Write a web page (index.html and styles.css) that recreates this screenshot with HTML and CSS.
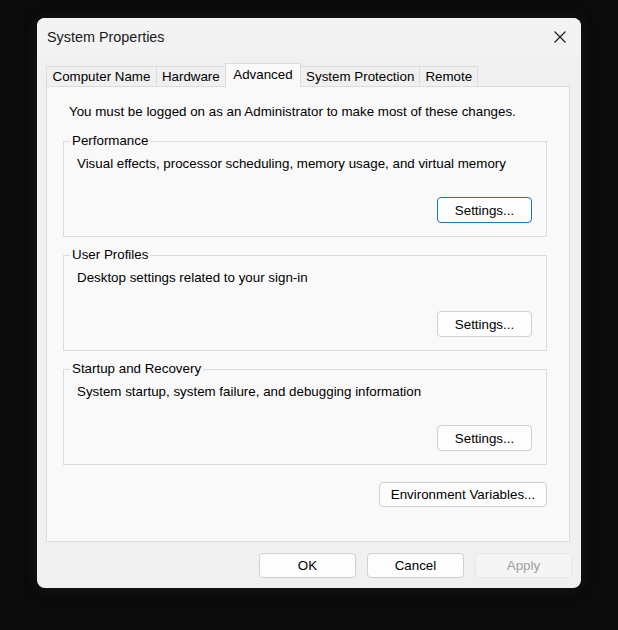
FILE: index.html
```html
<!DOCTYPE html>
<html>
<head>
  <meta charset="utf-8">
  <title>System Properties</title>
  <link rel="stylesheet" href="styles.css">
</head>
<body>
  <div class="dialog">
    <div class="titlebar">
      <span class="title">System Properties</span>
      <button class="close" title="Close">
        <svg width="12" height="12" viewBox="0 0 12 12">
          <path d="M0.5 0.5 L11.5 11.5 M11.5 0.5 L0.5 11.5" stroke="#1a1a1a" stroke-width="1.1" fill="none"/>
        </svg>
      </button>
    </div>
    <div class="main">
      <div class="tabs">
        <div class="tab">Computer Name</div>
        <div class="tab">Hardware</div>
        <div class="tab active">Advanced</div>
        <div class="tab">System Protection</div>
        <div class="tab">Remote</div>
      </div>
      <div class="panel">
        <p class="note">You must be logged on as an Administrator to make most of these changes.</p>

        <fieldset class="group">
          <legend>Performance</legend>
          <p class="desc">Visual effects, processor scheduling, memory usage, and virtual memory</p>
          <div class="row">
            <button class="btn focus">Settings...</button>
          </div>
        </fieldset>

        <fieldset class="group">
          <legend>User Profiles</legend>
          <p class="desc">Desktop settings related to your sign-in</p>
          <div class="row">
            <button class="btn">Settings...</button>
          </div>
        </fieldset>

        <fieldset class="group">
          <legend>Startup and Recovery</legend>
          <p class="desc">System startup, system failure, and debugging information</p>
          <div class="row">
            <button class="btn">Settings...</button>
          </div>
        </fieldset>

        <div class="row env">
          <button class="btn env-btn">Environment Variables...</button>
        </div>
      </div>
      <div class="footer">
        <button class="btn wide">OK</button>
        <button class="btn wide">Cancel</button>
        <button class="btn wide disabled">Apply</button>
      </div>
    </div>
  </div>
</body>
</html>
```

FILE: styles.css
```css
* {
  box-sizing: border-box;
}

html, body {
  margin: 0;
  height: 100%;
}

body {
  background: #0b0b0b;
  font-family: "Liberation Sans", Arial, sans-serif;
  font-size: 13.35px;
  color: #000;
}

.dialog {
  width: 544px;
  height: 570px;
  margin: 18px auto 0;
  background: #f0f0f0;
  border-radius: 8px;
  overflow: hidden;
  display: flex;
  flex-direction: column;
  box-shadow: 0 0 14px rgba(60, 60, 60, 0.25);
}

.titlebar {
  height: 37px;
  background: #f3f3f3;
  display: flex;
  align-items: center;
  padding-left: 10px;
}

.title {
  flex: 1;
  font-size: 14.4px;
  color: #1a1a1a;
}

.close {
  width: 42px;
  height: 37px;
  border: 0;
  padding: 0;
  background: none;
  display: flex;
  align-items: center;
  justify-content: center;
}

.main {
  padding: 8px 11px 0 9px;
}

/* tab strip */
.tabs {
  display: flex;
  align-items: flex-end;
  height: 23px;
}

.tab {
  height: 20px;
  padding: 0 5px;
  margin-left: -1px;
  border: 1px solid #dcdcdc;
  border-bottom: 0;
  background: #f0f0f0;
  display: flex;
  align-items: center;
  white-space: nowrap;
}

.tab:first-child {
  margin-left: 0;
  padding: 0 5.5px;
}

.tab.active {
  height: 24px;
  margin-bottom: -1px;
  padding: 0 7.5px 3px;
  background: #f9f9f9;
  position: relative;
  z-index: 1;
}

.panel {
  height: 456px;
  background: #f9f9f9;
  border: 1px solid #dcdcdc;
  padding: 17px 22px 0 16px;
}

.note {
  margin: 0 0 13px 6px;
  line-height: 16px;
}

/* group boxes */
.group {
  margin: 0 0 10px;
  padding: 7px 14px 13px 13px;
  border: 1px solid #dcdcdc;
  min-width: 0;
}

.group legend {
  margin-left: -7px;
  padding: 0 2px;
  line-height: 16px;
}

.desc {
  margin: 0;
  line-height: 16px;
}

.row {
  display: flex;
  justify-content: flex-end;
  margin-top: 25px;
}

.row.env {
  margin-top: 17px;
}

/* buttons */
.btn {
  width: 95px;
  height: 26px;
  padding: 0;
  border: 1px solid #d0d0d0;
  border-radius: 4px;
  background: #fdfdfd;
  font-family: inherit;
  font-size: inherit;
  color: #000;
}

.btn.focus {
  border-color: #1a73c6;
}

.env-btn {
  width: 168px;
  height: 25px;
}

.footer {
  display: flex;
  justify-content: flex-end;
  gap: 11px;
  padding-top: 11px;
  margin-right: -2px;
}

.btn.wide {
  width: 97px;
  height: 25px;
}

.btn.disabled {
  background: #f5f5f5;
  border-color: #e6e6e6;
  color: #a0a0a0;
}
```
